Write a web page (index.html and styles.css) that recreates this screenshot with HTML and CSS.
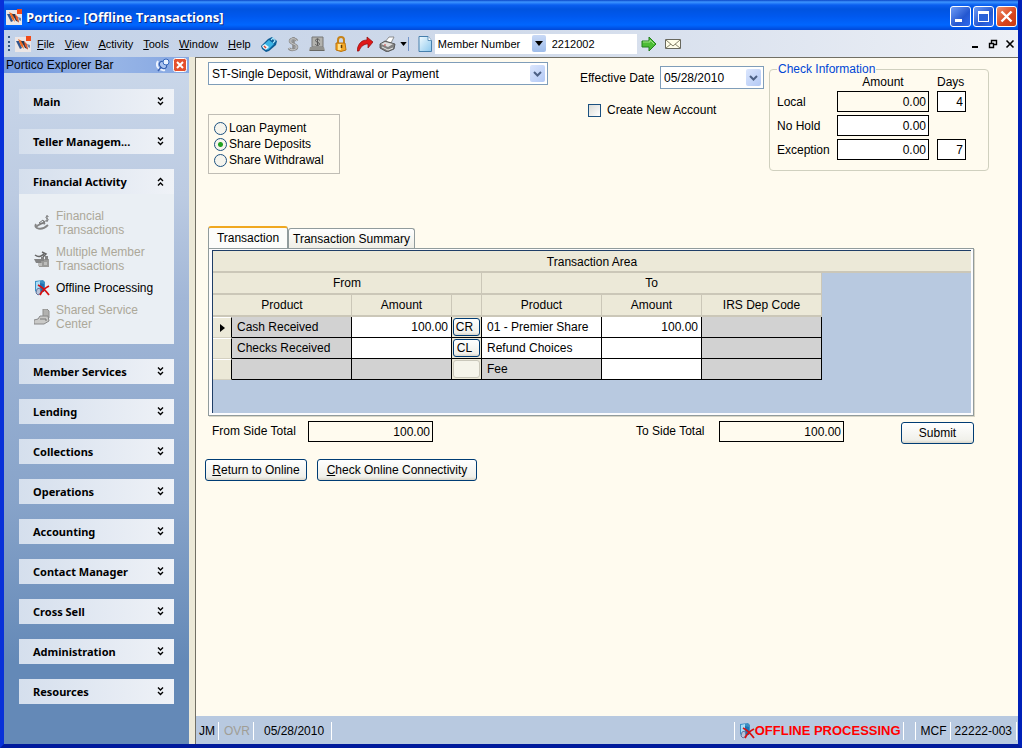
FILE: index.html
```html
<!DOCTYPE html>
<html lang="en">
<head>
<meta charset="utf-8">
<title>Portico - [Offline Transactions]</title>
<link rel="stylesheet" href="styles.css">
</head>
<body>
<svg class="defs" aria-hidden="true">
  <defs>
    <linearGradient id="blueFill" x1="0" y1="0" x2="1" y2="1"><stop offset="0" stop-color="#f2fbff"/><stop offset="1" stop-color="#8cc8ee"/></linearGradient>
    <symbol id="logo" viewBox="0 0 16 16">
      <path d="M0 1h16v15H0z" fill="#ece6e6"/><path d="M11 0h5v5h-5z" fill="#f04a18"/>
      <path d="M1 5h3l3 7-2 1z" fill="#31558e"/><path d="M3 3l4 2 2 8-3-3z" fill="#f06a20"/>
      <path d="M6 5h3l4 8-3-1z" fill="#27364f"/><path d="M9 5l3 3 1 6-3-4z" fill="#e2582a"/><path d="M12 8l3 1v3l-2-1z" fill="#6c86ad"/>
    </symbol>
    <symbol id="offline" viewBox="0 0 16 16">
      <path d="M1 1l8-1 2 2v9l-7 3-3-3z" fill="#3c8fc4"/><path d="M2 2l4-1v8l-4 2z" fill="#a9dcf5"/><path d="M6 3l4 1v8H6z" fill="#1f70b2"/>
      <path d="M3 9l3-1 1 5-3 2-2-2z" fill="#b9c3d8" stroke="#6378a0"/>
      <path d="M4 5c4 2 8 6 11 10M15 6c-4 2-7 5-9 9" fill="none" stroke="#d81010" stroke-width="1.800"/>
    </symbol>
    <symbol id="down" viewBox="0 0 8 5"><path d="M0 0h8L4 5z"/></symbol>
    <symbol id="chev" viewBox="0 0 9 6"><path d="M1 1l3.500 3.500L8 1" fill="none" stroke="#4d6185" stroke-width="2"/></symbol>
    <symbol id="expand" viewBox="0 0 7 9"><path d="M1 .5l2.500 2.500L6 .5M1 5l2.500 2.500L6 5" fill="none" stroke="#000" stroke-width="1.400"/></symbol>
    <symbol id="collapse" viewBox="0 0 7 9"><path d="M1 4l2.500-2.500L6 4M1 8.500L3.500 6 6 8.500" fill="none" stroke="#000" stroke-width="1.400"/></symbol>
  </defs>
</svg>
<div class="window">
  <header class="titlebar">
    <svg class="i16"><use href="#logo"/></svg>
    <h1>Portico - [Offline Transactions]</h1>
    <button class="winbtn" aria-label="Minimize"><svg viewBox="0 0 19 19"><path d="M4 12h7v3H4z" fill="#fff"/></svg></button>
    <button class="winbtn" aria-label="Maximize"><svg viewBox="0 0 19 19"><path d="M4 4h11v11H4z" fill="#fff"/><path d="M5 7h9v7H5z" fill="#2b62d8"/></svg></button>
    <button class="winbtn close" aria-label="Close"><svg viewBox="0 0 19 19"><path d="M4.500 4.500l10 10M14.500 4.500l-10 10" stroke="#fff" stroke-width="2.400"/></svg></button>
  </header>

  <div class="toolbar">
    <span class="grip"></span>
    <svg class="i16 menu-logo"><use href="#logo"/></svg>
    <nav class="menus">
      <button><u>F</u>ile</button><button><u>V</u>iew</button><button><u>A</u>ctivity</button><button><u>T</u>ools</button><button><u>W</u>indow</button><button><u>H</u>elp</button>
    </nav>
    <div class="tools">
      <button aria-label="Member tag"><svg viewBox="0 0 16 16"><path d="M0 10l7-7 4-2 5 4-1 4-7 6-3 1-4-3z" fill="#0b5c96"/><path d="M1 10l7-6 5 4-6 6z" fill="#3cb4e6"/><path d="M1 10l3-2 4 3-3 3-3-2z" fill="#e6f7fd"/><path d="M3 10l2 2" stroke="#e04028" stroke-width="1.500"/><path d="M10 4l2-2 2 3-2 2" fill="none" stroke="#a6e4fa" stroke-width="1.200"/></svg></button>
      <button aria-label="Money"><svg viewBox="0 0 16 16"><path d="M12 5C11 2 5 2 5 5s7 3 7 6-7 4-8 1M8.500 1v14" fill="none" stroke="#8d8d8d" stroke-width="2.600"/><path d="M12 5C11 2 5 2 5 5s7 3 7 6-7 4-8 1" fill="none" stroke="#cfcfcf"/></svg></button>
      <button aria-label="Cash drawer"><svg viewBox="0 0 16 16"><path d="M3 1h11v10H3z" fill="#b2b2ae" stroke="#777"/><path d="M1 11h14l1 4H0z" fill="#93938f"/><path d="M1 14.500h14" stroke="#696965"/><path d="M10.500 4.500c0-2-4-2-4 0s4 1.500 4 3.500-4 2-4 0M8.500 2.500v7" fill="none" stroke="#595959"/></svg></button>
      <button aria-label="Lock"><svg viewBox="0 0 16 16"><path d="M5 8V4c0-4 6-4 6 0v4" fill="none" stroke="#c78318" stroke-width="2"/><path d="M3 7h9l1 7-5 1.500L3 14z" fill="#f4a929" stroke="#b9730e"/><path d="M5 8h3v6H5z" fill="#ffe18d"/><path d="M8.500 9v3" stroke="#5f3b08" stroke-width="1.500"/></svg></button>
      <button aria-label="Forward"><svg viewBox="0 0 16 16"><path d="M0 15C1 7 5 4 10 4V1l6 5-5 6V8C7 8 4 10 2 15z" fill="#e01818" stroke="#8d0c0c" stroke-width=".7"/></svg></button>
      <button class="printer" aria-label="Print"><svg viewBox="0 0 18 16"><path d="M6 6l4-5h5l-3 6z" fill="#fff" stroke="#777" stroke-width=".8"/><path d="M1 8l5-3 10 3-1 5-7 3-7-4z" fill="#828282" stroke="#484848" stroke-width=".8"/><path d="M2 8l4-2 8 2-5 3z" fill="#dfdfdf"/><path d="M3 11l6 3 5-2" fill="none" stroke="#e8e8e8"/><path d="M5 9h2" stroke="#c44"/></svg><svg class="caret"><use href="#down"/></svg></button>
    </div>
    <span class="rule"></span>
    <button class="page" aria-label="New page"><svg viewBox="0 0 16 16"><path d="M2 .5h9l3.500 4v11H2z" fill="url(#blueFill)" stroke="#467fac"/><path d="M11 .5v4h3.500" fill="#fff" stroke="#467fac" stroke-width=".8"/></svg></button>
    <div class="lookup">
      <span class="combo member"><select aria-label="Search by"><option>Member Number</option></select><span class="drop"><svg class="caret"><use href="#down"/></svg></span></span><input aria-label="Member number value" value="2212002">
    </div>
    <button class="go" aria-label="Go"><svg viewBox="0 0 16 16"><path d="M1 5h7V1l7 7-7 7v-4H1z" fill="#4cbd35" stroke="#227f1c"/><path d="M2 6h7V4l4 4" fill="none" stroke="#9ee284"/></svg></button>
    <button class="go" aria-label="Mail"><svg viewBox="0 0 16 16"><path d="M.5 3.500h15v9H.5z" fill="#fffde8" stroke="#68685e"/><path d="M1 4l7 6 7-6M1 12l5-4M15 12l-5-4" fill="none" stroke="#85826a"/></svg></button>
    <div class="childbtns">
      <button aria-label="Minimize child"><svg viewBox="0 0 10 10"><path d="M1 7h6v2H1z"/></svg></button>
      <button aria-label="Restore child"><svg viewBox="0 0 10 10"><path d="M3.500 4V1.500h5v4H6M3 1.500h6M1.500 4.500h4v4h-4zM1 4.500h5" fill="none" stroke="#000" stroke-width="1.400"/></svg></button>
      <button aria-label="Close child"><svg viewBox="0 0 10 10"><path d="M1.500 1.500l7 7M8.500 1.500l-7 7" stroke="#000" stroke-width="1.600"/></svg></button>
    </div>
  </div>

  <div class="body">
    <aside class="sidebar">
      <div class="sidehead">
        <h2>Portico Explorer Bar</h2>
        <button aria-label="Pin"><svg viewBox="0 0 14 14"><path d="M2 3c-3 5 1 10 7 9" fill="none" stroke="#eef4ff" stroke-width="2"/><path d="M2 13l4-5" stroke="#3a62b4" stroke-width="1.500"/><ellipse cx="7" cy="7" rx="3" ry="4" transform="rotate(-45 7 7)" fill="#a9c2ee" stroke="#2e59ab"/><circle cx="10" cy="4" r="3" fill="#e9f2ff" stroke="#3567bd"/></svg></button>
        <button aria-label="Close explorer bar"><svg viewBox="0 0 14 14"><rect x=".5" y=".5" width="13" height="13" rx="2" fill="#e5502d" stroke="#fff"/><path d="M4 4l6 6M10 4l-6 6" stroke="#fff" stroke-width="2"/></svg></button>
      </div>
      <nav class="groups">
        <button class="group">Main<svg><use href="#expand"/></svg></button>
        <button class="group">Teller Managem...<svg><use href="#expand"/></svg></button>
        <section>
          <button class="group">Financial Activity<svg><use href="#collapse"/></svg></button>
          <div class="links">
            <a class="off" href="#"><svg class="i16" viewBox="0 0 16 16"><path d="M2 9c-3 5 6 7 12 1M2 12c3-4 8-3 9-6" fill="none" stroke="#858585" stroke-width="1.800"/><path d="M5 8l4-3 2 4zM14.500 1.500c-2-1-4 1-1.500 2s1 3-1.500 2M13 0v7" fill="none" stroke="#777"/></svg>Financial Transactions</a>
            <a class="off" href="#"><svg class="i16" viewBox="0 0 16 16"><path d="M4 8h11v8H5z" fill="#9a9a98"/><path d="M1 4c4 3 6 1 9-1M8 1l4 2-3 3" fill="none" stroke="#666" stroke-width="1.500"/><path d="M0 8h7v4H2zM7 6h3v4H7zM11 5h3v4h-3z" fill="#838383"/><path d="M4 12h4v3H4zM10 11h3v3h-3z" fill="#bdbdbb"/></svg>Multiple Member Transactions</a>
            <a href="#"><svg class="i16"><use href="#offline"/></svg>Offline Processing</a>
            <a class="off" href="#"><svg class="i16" viewBox="0 0 16 16"><path d="M9 0h4l2 2v7h-3l-3-1z" fill="#b1b1af" stroke="#8d8d8b"/><path d="M0 11l4-1 2-3h8l1 5-5 3H0z" fill="#c9c9c7" stroke="#888"/><path d="M6 10h6v2" fill="none" stroke="#777"/></svg>Shared Service Center</a>
          </div>
        </section>
        <button class="group">Member Services<svg><use href="#expand"/></svg></button>
        <button class="group">Lending<svg><use href="#expand"/></svg></button>
        <button class="group">Collections<svg><use href="#expand"/></svg></button>
        <button class="group">Operations<svg><use href="#expand"/></svg></button>
        <button class="group">Accounting<svg><use href="#expand"/></svg></button>
        <button class="group">Contact Manager<svg><use href="#expand"/></svg></button>
        <button class="group">Cross Sell<svg><use href="#expand"/></svg></button>
        <button class="group">Administration<svg><use href="#expand"/></svg></button>
        <button class="group">Resources<svg><use href="#expand"/></svg></button>
      </nav>
    </aside>

    <div class="workspace">
      <main class="form">
        <div class="top">
          <div class="kind">
            <span class="combo"><select aria-label="Transaction type"><option>ST-Single Deposit, Withdrawal or Payment</option></select><span class="drop"><svg class="chev"><use href="#chev"/></svg></span></span>
            <div class="radios" role="radiogroup" aria-label="Transaction kind">
              <label><input type="radio" name="kind">Loan Payment</label>
              <label><input type="radio" name="kind" checked>Share Deposits</label>
              <label><input type="radio" name="kind">Share Withdrawal</label>
            </div>
          </div>
          <div class="when">
            <div class="date"><label for="effective">Effective Date</label>
              <span class="combo"><select id="effective"><option>05/28/2010</option></select><span class="drop"><svg class="chev"><use href="#chev"/></svg></span></span></div>
            <label class="create"><input type="checkbox">Create New Account</label>
          </div>
          <fieldset class="checks">
            <legend>Check Information</legend>
            <span class="h-amount">Amount</span><span class="h-days">Days</span>
            <label for="local">Local</label><input id="local" class="num ro" value="0.00" readonly><input class="num" aria-label="Local days" value="4">
            <label for="nohold">No Hold</label><input id="nohold" class="num" value="0.00"><span></span>
            <label for="exception">Exception</label><input id="exception" class="num" value="0.00"><input class="num" aria-label="Exception days" value="7">
          </fieldset>
        </div>

        <div class="transaction">
          <div class="tabs" role="tablist">
            <button role="tab" aria-selected="true">Transaction</button><button role="tab" aria-selected="false">Transaction Summary</button>
          </div>
          <div class="panel">
            <div class="area">
              <div class="areahead">Transaction Area</div>
              <table>
                <colgroup><col class="c-mark"><col class="c-prod"><col class="c-amt"><col class="c-btn"><col class="c-prod"><col class="c-amt"><col class="c-prod"></colgroup>
                <thead>
                  <tr><th colspan="4">From</th><th colspan="3">To</th></tr>
                  <tr><th colspan="2">Product</th><th>Amount</th><th></th><th>Product</th><th>Amount</th><th>IRS Dep Code</th></tr>
                </thead>
                <tbody>
                  <tr><th><svg class="mark" viewBox="0 0 5 8"><path d="M0 0l5 4-5 4z"/></svg></th><td class="g">Cash Received</td><td class="r">100.00</td><td class="b"><button>CR</button></td><td>01 - Premier Share</td><td class="r">100.00</td><td class="g"></td></tr>
                  <tr><th></th><td class="g">Checks Received</td><td></td><td class="b"><button>CL</button></td><td>Refund Choices</td><td></td><td class="g"></td></tr>
                  <tr><th></th><td class="g"></td><td class="g"></td><td class="b"><button disabled aria-label="Unavailable"></button></td><td class="g">Fee</td><td></td><td class="g"></td></tr>
                </tbody>
              </table>
            </div>
          </div>
          <div class="totals">
            <label for="from">From Side Total</label><input id="from" class="num ro" value="100.00" readonly>
            <label class="to" for="to">To Side Total</label><input id="to" class="num ro" value="100.00" readonly>
            <button class="btn submit">Submit</button>
          </div>
        </div>
        <div class="actions"><button class="btn return"><u>R</u>eturn to Online</button><button class="btn check"><u>C</u>heck Online Connectivity</button></div>
      </main>
      <footer class="status">
        <span>JM</span><span class="dim">OVR</span><span class="day">05/28/2010</span>
        <strong><svg class="i16"><use href="#offline"/></svg>OFFLINE PROCESSING</strong><span class="mcf">MCF</span><span>22222-003</span>
      </footer>
    </div>
  </div>
</div>
</body>
</html>
```
FILE: styles.css
```css
* { box-sizing: border-box; }
body { margin: 0; font: 12px/14px "Liberation Sans", Arial, sans-serif; color: #000; }
button, input, select { font: inherit; color: inherit; margin: 0; padding: 0; border: 0; border-radius: 0; background: none; }
h1, h2 { margin: 0; }
.defs { position: absolute; width: 0; height: 0; }
.i16 { width: 16px; height: 16px; flex: none; }
.caret { width: 8px; height: 5px; }
.window { min-height: 100vh; display: flex; flex-direction: column; border: solid #0831d9; border-width: 0 4px 4px; border-color: #0831d9 #0020b8 #001a9c #0831d9; background: #0054e3; }

.titlebar { height: 30px; display: flex; align-items: center; gap: 2px; padding: 3px 1px 0 2px; background: linear-gradient(#0a46c8 0, #3d95ff 2px, #0a5ff0 5px, #0054e0 9px, #0058ee 16px, #0066ff 25px, #0048d8 30px); }
.titlebar h1 { flex: 1; margin-left: 2px; font: bold 13px/18px "Open Sans", "Noto Sans", sans-serif; color: #fff; text-shadow: 1px 1px #0a2a80; }
.winbtn { width: 21px; height: 21px; border: 1px solid #fff; border-radius: 3px; background: linear-gradient(135deg, #6f9cf5, #2457d0 60%, #2e6bf0); }
.winbtn.close { background: linear-gradient(135deg, #f0906c, #d9441c 60%, #c83c14); }
.winbtn svg { display: block; width: 19px; height: 19px; }

.toolbar { height: 27px; display: flex; align-items: center; padding: 0 3px 0 4px; font-size: 11px; background: linear-gradient(90deg, #c3d2e8, #d0daea 50%, #edf0f6); }
.toolbar button svg { display: block; width: 16px; height: 16px; }
.grip { width: 3px; height: 15px; border-left: 2px dotted #34567f; }
.menu-logo { margin: 0 2px 0 4px; }
.menus { display: flex; gap: 10px; margin-left: 2px; padding-left: 2px; }
.tools { display: flex; gap: 8px; margin-left: 10px; }
.tools .printer { display: flex; align-items: center; gap: 3px; margin-left: -2px; }
.toolbar .printer svg { width: 18px; }
.toolbar .printer .caret { width: 7px; height: 4px; }
.rule { width: 1px; height: 14px; margin: 0 8px 0 1px; background: #7395ca; }
.lookup { display: flex; height: 20px; margin: 0 4px 0 2px; background: #fff; }
.lookup > input { width: 91px; padding-left: 6px; }
.go { margin-right: 8px; }
.childbtns { display: flex; gap: 7px; margin-left: auto; }
.toolbar .childbtns svg { width: 10px; height: 10px; }

.combo { position: relative; display: block; border: 1px solid #7f9db9; background: #fff; }
.combo select { display: block; width: 100%; height: 21px; padding-left: 3px; appearance: none; }
.drop { position: absolute; top: 2px; right: 2px; bottom: 2px; width: 15px; display: flex; align-items: center; justify-content: center; border-radius: 2px; background: linear-gradient(135deg, #dbe6fd, #b3c9f5); pointer-events: none; }
.chev { width: 9px; height: 6px; }
.combo.member { width: 111px; border: 0; }
.member select { height: 20px; }
.member .drop { inset: 1px 0 2px auto; width: 14px; background: linear-gradient(#c9d9f6, #9ebcea); }

.body { flex: 1; display: flex; background: #ece9d8; }
.sidebar { width: 185px; flex: none; background: linear-gradient(#cbd8ea 0, #bccbe2 20%, #a2b7d7 35%, #87a3c9 65%, #6489b7 88%); }
.sidehead { height: 16px; display: flex; align-items: center; gap: 3px; padding: 0 2px; background: linear-gradient(90deg, #6f95dc, #96b4e6 60%, #86a7e2); }
.sidehead h2 { flex: 1; font-size: 12px; line-height: 16px; font-weight: normal; }
.sidehead svg { display: block; width: 14px; height: 14px; }
.groups { display: flex; flex-direction: column; gap: 15px; padding: 16px 15px; }
.group { width: 100%; height: 25px; display: flex; align-items: center; justify-content: space-between; padding: 0 10px 0 14px; font: bold 11px/14px "Noto Sans", sans-serif; background: linear-gradient(90deg, #d5dfed, #eff2f7); }
.group svg { width: 7px; height: 9px; }
.links { display: grid; gap: 8px; padding: 15px 15px 13px; background: #eaeff4; }
.links a { display: flex; align-items: center; gap: 6px; color: #000; text-decoration: none; }
.links .i16 { margin: -1px 0; }
.links .off { color: #aca899; }

.workspace { flex: 1; min-width: 0; display: flex; flex-direction: column; margin-left: 6px; border: solid #716f64; border-width: 1px 0 0 1px; background: #fffbef; }
.form { flex: 1; padding: 4px 28px 0 12px; }
.top { display: flex; align-items: flex-start; height: 164px; }
.top > * { flex: none; }
.kind { width: 340px; }
.radios { width: 132px; margin-top: 29px; padding: 5px; border: 1px solid #c0bdb5; }
.radios label { display: flex; align-items: center; height: 16px; gap: 2px; }
input[type=radio] { appearance: none; width: 13px; height: 13px; border: 1px solid #1c5180; border-radius: 50%; background: #f5f4ed; }
input[type=radio]:checked { background: radial-gradient(#21a121 0 2px, #f5f4ed 3px); }
.when { width: 184px; margin: 4px 0 0 32px; }
.date { display: flex; align-items: center; justify-content: space-between; white-space: nowrap; }
.date .combo { width: 104px; }
.create { display: flex; align-items: center; gap: 6px; margin: 14px 0 0 8px; }
.create input { appearance: none; width: 13px; height: 13px; border: 1px solid #1c5180; background: linear-gradient(135deg, #dcdcd7, #fff); }
.checks { width: 220px; margin: 0 0 0 5px; padding: 0 21px 10px 7px; border: 1px solid #d0d0bf; border-radius: 4px; display: grid; grid-template-columns: 52px 92px 29px; column-gap: 8px; row-gap: 3px; justify-content: start; align-items: center; }
.checks legend { padding: 0 1px; line-height: 14px; color: #0046d5; }
.checks .h-amount { grid-column: 2; text-align: center; }
.checks .h-days { grid-column: 3; }
.checks span { line-height: 12px; }
.num { min-width: 0; height: 21px; padding-right: 2px; border: 1px solid #000; background: #fff; text-align: right; }
.ro { background: #fffbef; }

.transaction { max-width: 766px; }
.tabs { display: flex; align-items: flex-end; height: 22px; }
.tabs button { height: 20px; padding: 0 4px; border: 1px solid #919b9c; border-bottom: 0; border-radius: 3px 3px 0 0; background: linear-gradient(#fff, #efeee6); }
.tabs [aria-selected=true] { height: 22px; width: 80px; border-top: 2px solid #f0a820; background: #fcfcfa; }
.panel { padding: 1px 2px 2px 3px; border: 1px solid #919b9c; background: #fcfcfe; box-shadow: 1px 1px 0 #d8d5c6; }
.area { height: 163px; border: solid #1f3e67; border-width: 1px 0 0 1px; background: #b8c9e0; }
.areahead { height: 22px; line-height: 22px; text-align: center; background: #ece9d8; border-bottom: 2px solid #cbc7b8; }
table { width: 609px; table-layout: fixed; border-collapse: separate; border-spacing: 0; }
.c-mark { width: 19px; } .c-prod { width: 120px; } .c-amt { width: 100px; } .c-btn { width: 30px; }
th { height: 22px; padding: 0; font-weight: normal; background: #ece9d8; border-bottom: 2px solid #cbc7b8; border-right: 1px solid #cbc7b8; }
tbody th { height: 21px; border: solid #fff; border-width: 1px 0; border-right: 1px solid #000; border-bottom-color: #d4d0c0; }
td { height: 21px; padding: 0 5px; border: solid #000; border-width: 0 1px 1px 0; background: #fff; white-space: nowrap; line-height: 14px; }
td.g { background: #d2d2d2; }
td.r { text-align: right; padding-right: 3px; }
td.b { padding: 0 1px; background: #ece9d8; }
td button, .btn { border: 1px solid #003c74; border-radius: 3px; background: linear-gradient(#fff, #f0f0ea 85%, #d9d5c9); }
td button { display: block; width: 27px; height: 18px; padding-right: 4px; }
td button:disabled { border-color: #c9c7ba; background: #f5f4ea; }
.mark { display: block; width: 5px; height: 8px; margin-left: 7px; }
.totals { display: flex; align-items: flex-start; margin-top: 5px; padding-left: 4px; }
.totals label { line-height: 21px; width: 96px; }
.totals label.to { width: 83px; margin-left: auto; }
.totals .num { width: 125px; }
.btn { height: 22px; }
.submit { width: 73px; margin: 1px 0 0 57px; }
.actions { display: flex; gap: 10px; margin: 15px 0 0 -3px; }
.return { width: 102px; } .check { width: 160px; }

.status { height: 28px; display: flex; align-items: center; padding: 1px 1px 0 3px; background: #b8c9e0; }
.status span, .status strong { display: flex; align-items: center; height: 18px; padding-right: 3px; border-right: 1px solid #fff; white-space: nowrap; }
.status .dim { padding-left: 5px; color: #a09e96; }
.status .day { padding: 0 7px 0 10px; }
.status strong { margin-left: auto; padding: 0 2px 0 4px; border-left: 1px solid #fff; font-size: 13px; color: #f00; }
.status .mcf { margin-left: 11px; padding-left: 5px; border-left: 1px solid #fff; }
.status span:last-child { padding: 0 4px; }
```
